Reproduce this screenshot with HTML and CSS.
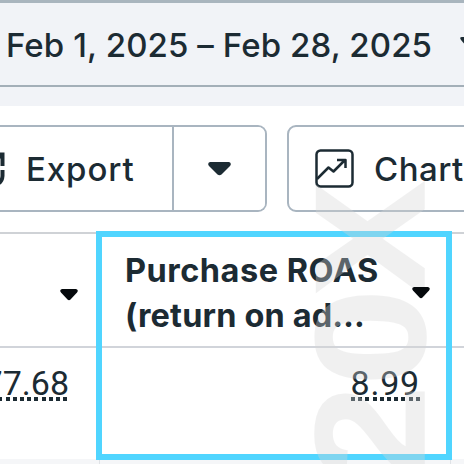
FILE: index.html
```html
<!DOCTYPE html>
<html lang="en">
<head>
<meta charset="utf-8">
<title>Report</title>
<link rel="stylesheet" href="styles.css">
</head>
<body>
<main class="viewport">
  <header class="topbar">
    <div class="date-range">
      <span class="date">Feb 1, 2025 – Feb 28, 2025</span>
      <svg class="date-caret" width="22" height="14" viewBox="0 0 22 14"><path d="M2 0H20Q23 0 21 3L13 12Q11 14 9 12L1 3Q-1 0 2 0Z"/></svg>
    </div>
  </header>
  <section class="toolbar">
    <div class="export">
      <button class="export-main">
        <svg class="export-icon" width="38" height="38" viewBox="0 0 38 38"><path d="M22 4.500H35.500V16M35.500 20V26Q35 34 27 34H10Q2 34 2 26V11Q2 3 10 3M18 21L34 5"/></svg>
        <span class="button-text export-text">Export</span>
      </button>
      <button class="export-menu" aria-label="Export options">
        <svg width="23" height="14" viewBox="0 0 23 14"><path d="M2 0H21Q24 1 22 4L13.5 12.5Q11.5 14 9.500 12.500L1 4Q-1 1 2 0Z"/></svg>
      </button>
    </div>
    <button class="charts">
      <svg class="chart-icon" width="39" height="39" viewBox="0 0 39 39"><rect x="1.500" y="1.500" width="36" height="36" rx="4"/><path d="M2 30L13.500 18.500L18.500 22.500L29.500 11.500M22 11H30.500V19"/></svg>
      <span class="button-text charts-text">Chart</span>
    </button>
  </section>
  <section class="table">
    <div class="cell head head-left"><svg class="sort" width="18" height="12" viewBox="0 0 18 12"><path d="M2 0H16Q19 1 17 3.500L10.500 10.500Q9 12 7.500 10.500L1 3.500Q-1 1 2 0Z"/></svg></div>
    <div class="cell head head-roas">
      <div class="title"><span class="title-one">Purchase ROAS</span><span class="title-two">(return on ad…</span></div>
      <svg class="sort" width="18" height="12" viewBox="0 0 18 12"><path d="M2 0H16Q19 1 17 3.500L10.500 10.500Q9 12 7.500 10.500L1 3.500Q-1 1 2 0Z"/></svg>
    </div>
    <div class="cell head"></div>
    <div class="cell value value-left"><span class="number">77.68</span></div>
    <div class="cell value value-roas"><span class="number">8.99</span></div>
    <div class="cell value"></div>
    <div class="cell next"></div><div class="cell next"></div><div class="cell next"></div>
  </section>
  <div class="selection"></div>
  <div class="watermark">2<span class="zero">0</span>X</div>
</main>
</body>
</html>
```
FILE: styles.css
```css
* { box-sizing: border-box; }
body { margin: 0; background: #fff; color: #1c2b33; font-family: Inter, sans-serif; }
button { padding: 0; background: #fff; color: inherit; font: inherit; border: 0; }
svg { display: block; flex: none; fill: #1c2b33; }
.viewport { position: relative; width: 464px; height: 464px; overflow: hidden; }
.topbar { height: 106px; background: #f1f3f7; }
.date-range { height: 87px; display: flex; align-items: flex-start; border-top: 3px solid #a9b5be; border-bottom: 2px solid #a3afb8; overflow: hidden; }
.date { flex: none; width: 452px; padding-left: 6px; margin-top: 19px; font-size: 33px; font-weight: 500; letter-spacing: 0.100px; line-height: 46px; white-space: nowrap; }
.date-caret { margin: 34px 0 0 8px; }
.toolbar { height: 126px; padding-top: 19px; display: flex; gap: 20px; }
.export { flex: none; width: 267px; height: 87px; display: flex; border: 2px solid #a9b5c0; border-left: 0; border-radius: 0 9px 9px 0; overflow: hidden; }
.export-main { width: 174px; display: flex; align-items: center; border-right: 2px solid #a9b5c0; }
.export-icon { margin-left: -33px; fill: none; stroke: #1c2b33; stroke-width: 4; }
.button-text { font-size: 33px; font-weight: 500; line-height: 46px; white-space: nowrap; }
.export-text { margin-left: 21px; letter-spacing: 0.900px; }
.export-menu { flex: 1; display: flex; align-items: center; justify-content: center; }
.charts { flex: none; width: 220px; height: 87px; display: flex; align-items: center; border: 2px solid #a9b5c0; border-radius: 9px; }
.chart-icon { margin-left: 26px; fill: none; stroke: #1c2b33; stroke-width: 2.500; stroke-linejoin: round; }
.charts-text { margin-left: 20px; letter-spacing: 0.500px; }
.table { display: grid; grid-template-columns: 100px 351px 13px; grid-template-rows: 116px 111px 5px; }
.cell { border-right: 1px solid #dfe2e6; }
.cell:nth-child(3n) { border-right: 0; }
.head { display: flex; align-items: center; border-top: 2px solid #cfd2d6; border-bottom: 2px solid #d1d4da; }
.head-left { padding: 10px 0 0 60px; }
.head-roas { justify-content: space-between; padding: 6px 20px 0 25px; }
.sort { fill: #05090c; position: relative; z-index: 2; }
.head-roas .sort { margin-top: 0; }
.title { font-weight: 700; font-size: 32.500px; line-height: 45px; white-space: nowrap; }
.title span { display: block; }
.title-one { margin-right: -10px; letter-spacing: 0.500px; }
.title-two { letter-spacing: 0.150px; }
.value { display: flex; justify-content: flex-end; padding-top: 14px; font-family: Roboto, sans-serif; font-size: 34px; line-height: 42px; }
.value-left { padding-right: 30px; }
.value-roas { padding-right: 30px; letter-spacing: 0.800px; }
.number { height: 39px; background: repeating-linear-gradient(to right, #1c2b33 0 4px, transparent 4px 7.200px) bottom / 100% 4px no-repeat; }
.next { background: #f5f6f8; }
.selection { position: absolute; left: 96px; top: 231px; width: 356px; height: 229px; border: 6px solid #50d5ff; }
.watermark { position: absolute; left: 292px; top: 482px; width: 290px; height: 157px; color: #d6d6d6; -webkit-text-stroke: 1.500px #d6d6d6; opacity: 0.34; font: 700 155px/157px "Liberation Sans", sans-serif; white-space: nowrap; transform: rotate(-90deg) scaleX(1.120); transform-origin: 0 0; pointer-events: none; }
.zero { letter-spacing: -7px; }
```
